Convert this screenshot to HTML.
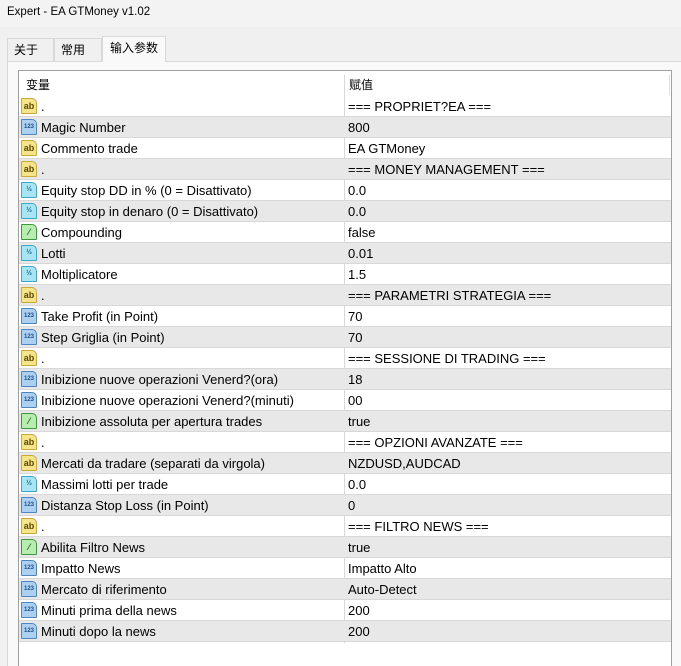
<!DOCTYPE html>
<html style="width:681px;height:666px;overflow:hidden"><head><meta charset="utf-8"><style>
*{margin:0;padding:0;box-sizing:border-box}
body{width:681px;height:666px;background:#f0f0f0;font-family:"Liberation Sans","Noto Sans CJK SC",sans-serif;font-size:13px;color:#000;position:relative;overflow:hidden}
.title{position:absolute;left:0;top:0;width:681px;height:27px;background:#f3f3f3;font-size:11.5px;line-height:24px;padding-left:7px}
.tab{position:absolute;top:38px;height:23px;border:1px solid #d9d9d9;border-bottom:none;background:#f0f0f0;font-size:12px;line-height:22px;padding-left:6px}
.panel{position:absolute;left:7px;top:61px;width:674px;height:605px;background:#f9f9f9;border-top:1px solid #d9d9d9;border-left:1px solid #d9d9d9}
.tbl{position:absolute;left:18px;top:70px;width:654px;height:600px;background:#fff;border:1px solid #a0a0a0}
.hdr{position:absolute;left:0;top:0;width:652px;height:25px;background:#fff}
.hdr span{position:absolute;top:5px;font-size:12px}
.row{position:absolute;left:0;width:652px;height:21px;border-bottom:1px solid #d8d8d8}
.row.g{background:#e8e8e8}
.row .n{position:absolute;left:22px;top:3px;white-space:nowrap}
.row .v{position:absolute;left:329px;top:3px;white-space:nowrap}
.vl{position:absolute;left:325px;top:0;width:1px;height:572px;background:#d8d8d8}
.ic{position:absolute;left:2px;top:2px;width:16px;height:16px;font-size:8px;line-height:14px;text-align:center;font-weight:bold;border-radius:1px 5px 1px 1px}
.ab{background:#f5e48a;border:1px solid #c9a93a;color:#5a4800;font-size:9px}
.n1{background:#aed0f0;border:1px solid #4d86c0;color:#1a4f8a;font-size:6px}
.hf{background:#a8e4f4;border:1px solid #3fa6c8;color:#1a6a88;font-size:7px}
.bo{background:#b8ecb0;border:1px solid #3c9a3c;color:#1d6b1d;font-size:9px}
</style></head><body>
<div class="title">Expert - EA GTMoney v1.02</div>
<div class="panel"></div>
<div class="tab" style="left:7px;width:47px">关于</div>
<div class="tab" style="left:54px;width:48px">常用</div>
<div class="tab" style="left:102px;top:36px;height:26px;width:64px;background:#f9f9f9;line-height:22px;padding-left:7px">输入参数</div>
<div class="tbl">
<div class="hdr"><span style="left:7px">变量</span><span style="left:330px">赋值</span><div style="position:absolute;left:650px;top:4px;width:1px;height:20px;background:#e0e0e0"></div></div>
<div class="vl" style="top:4px;height:568px"></div>
<div id="rows"></div>
</div>
<script>
var d=[["ab",".","=== PROPRIET?EA ==="],["n1","Magic Number","800"],["ab","Commento trade","EA GTMoney"],["ab",".","=== MONEY MANAGEMENT ==="],["hf","Equity stop DD in % (0 = Disattivato)","0.0"],["hf","Equity stop in denaro (0 = Disattivato)","0.0"],["bo","Compounding","false"],["hf","Lotti","0.01"],["hf","Moltiplicatore","1.5"],["ab",".","=== PARAMETRI STRATEGIA ==="],["n1","Take Profit (in Point)","70"],["n1","Step Griglia (in Point)","70"],["ab",".","=== SESSIONE DI TRADING ==="],["n1","Inibizione nuove operazioni Venerd?(ora)","18"],["n1","Inibizione nuove operazioni Venerd?(minuti)","00"],["bo","Inibizione assoluta per apertura trades","true"],["ab",".","=== OPZIONI AVANZATE ==="],["ab","Mercati da tradare (separati da virgola)","NZDUSD,AUDCAD"],["hf","Massimi lotti per trade","0.0"],["n1","Distanza Stop Loss (in Point)","0"],["ab",".","=== FILTRO NEWS ==="],["bo","Abilita Filtro News","true"],["n1","Impatto News","Impatto Alto"],["n1","Mercato di riferimento","Auto-Detect"],["n1","Minuti prima della news","200"],["n1","Minuti dopo la news","200"]];
var lab={ab:"ab",n1:"123",hf:"½",bo:"⁄"};
var h="";
d.forEach(function(r,i){h+='<div class="row'+(i%2?' g':'')+'" style="top:'+(25+i*21)+'px"><div class="ic '+r[0]+'">'+lab[r[0]]+'</div><span class="n">'+r[1]+'</span><span class="v">'+r[2]+'</span></div>';});
document.getElementById("rows").innerHTML=h;
</script>
</body></html>
